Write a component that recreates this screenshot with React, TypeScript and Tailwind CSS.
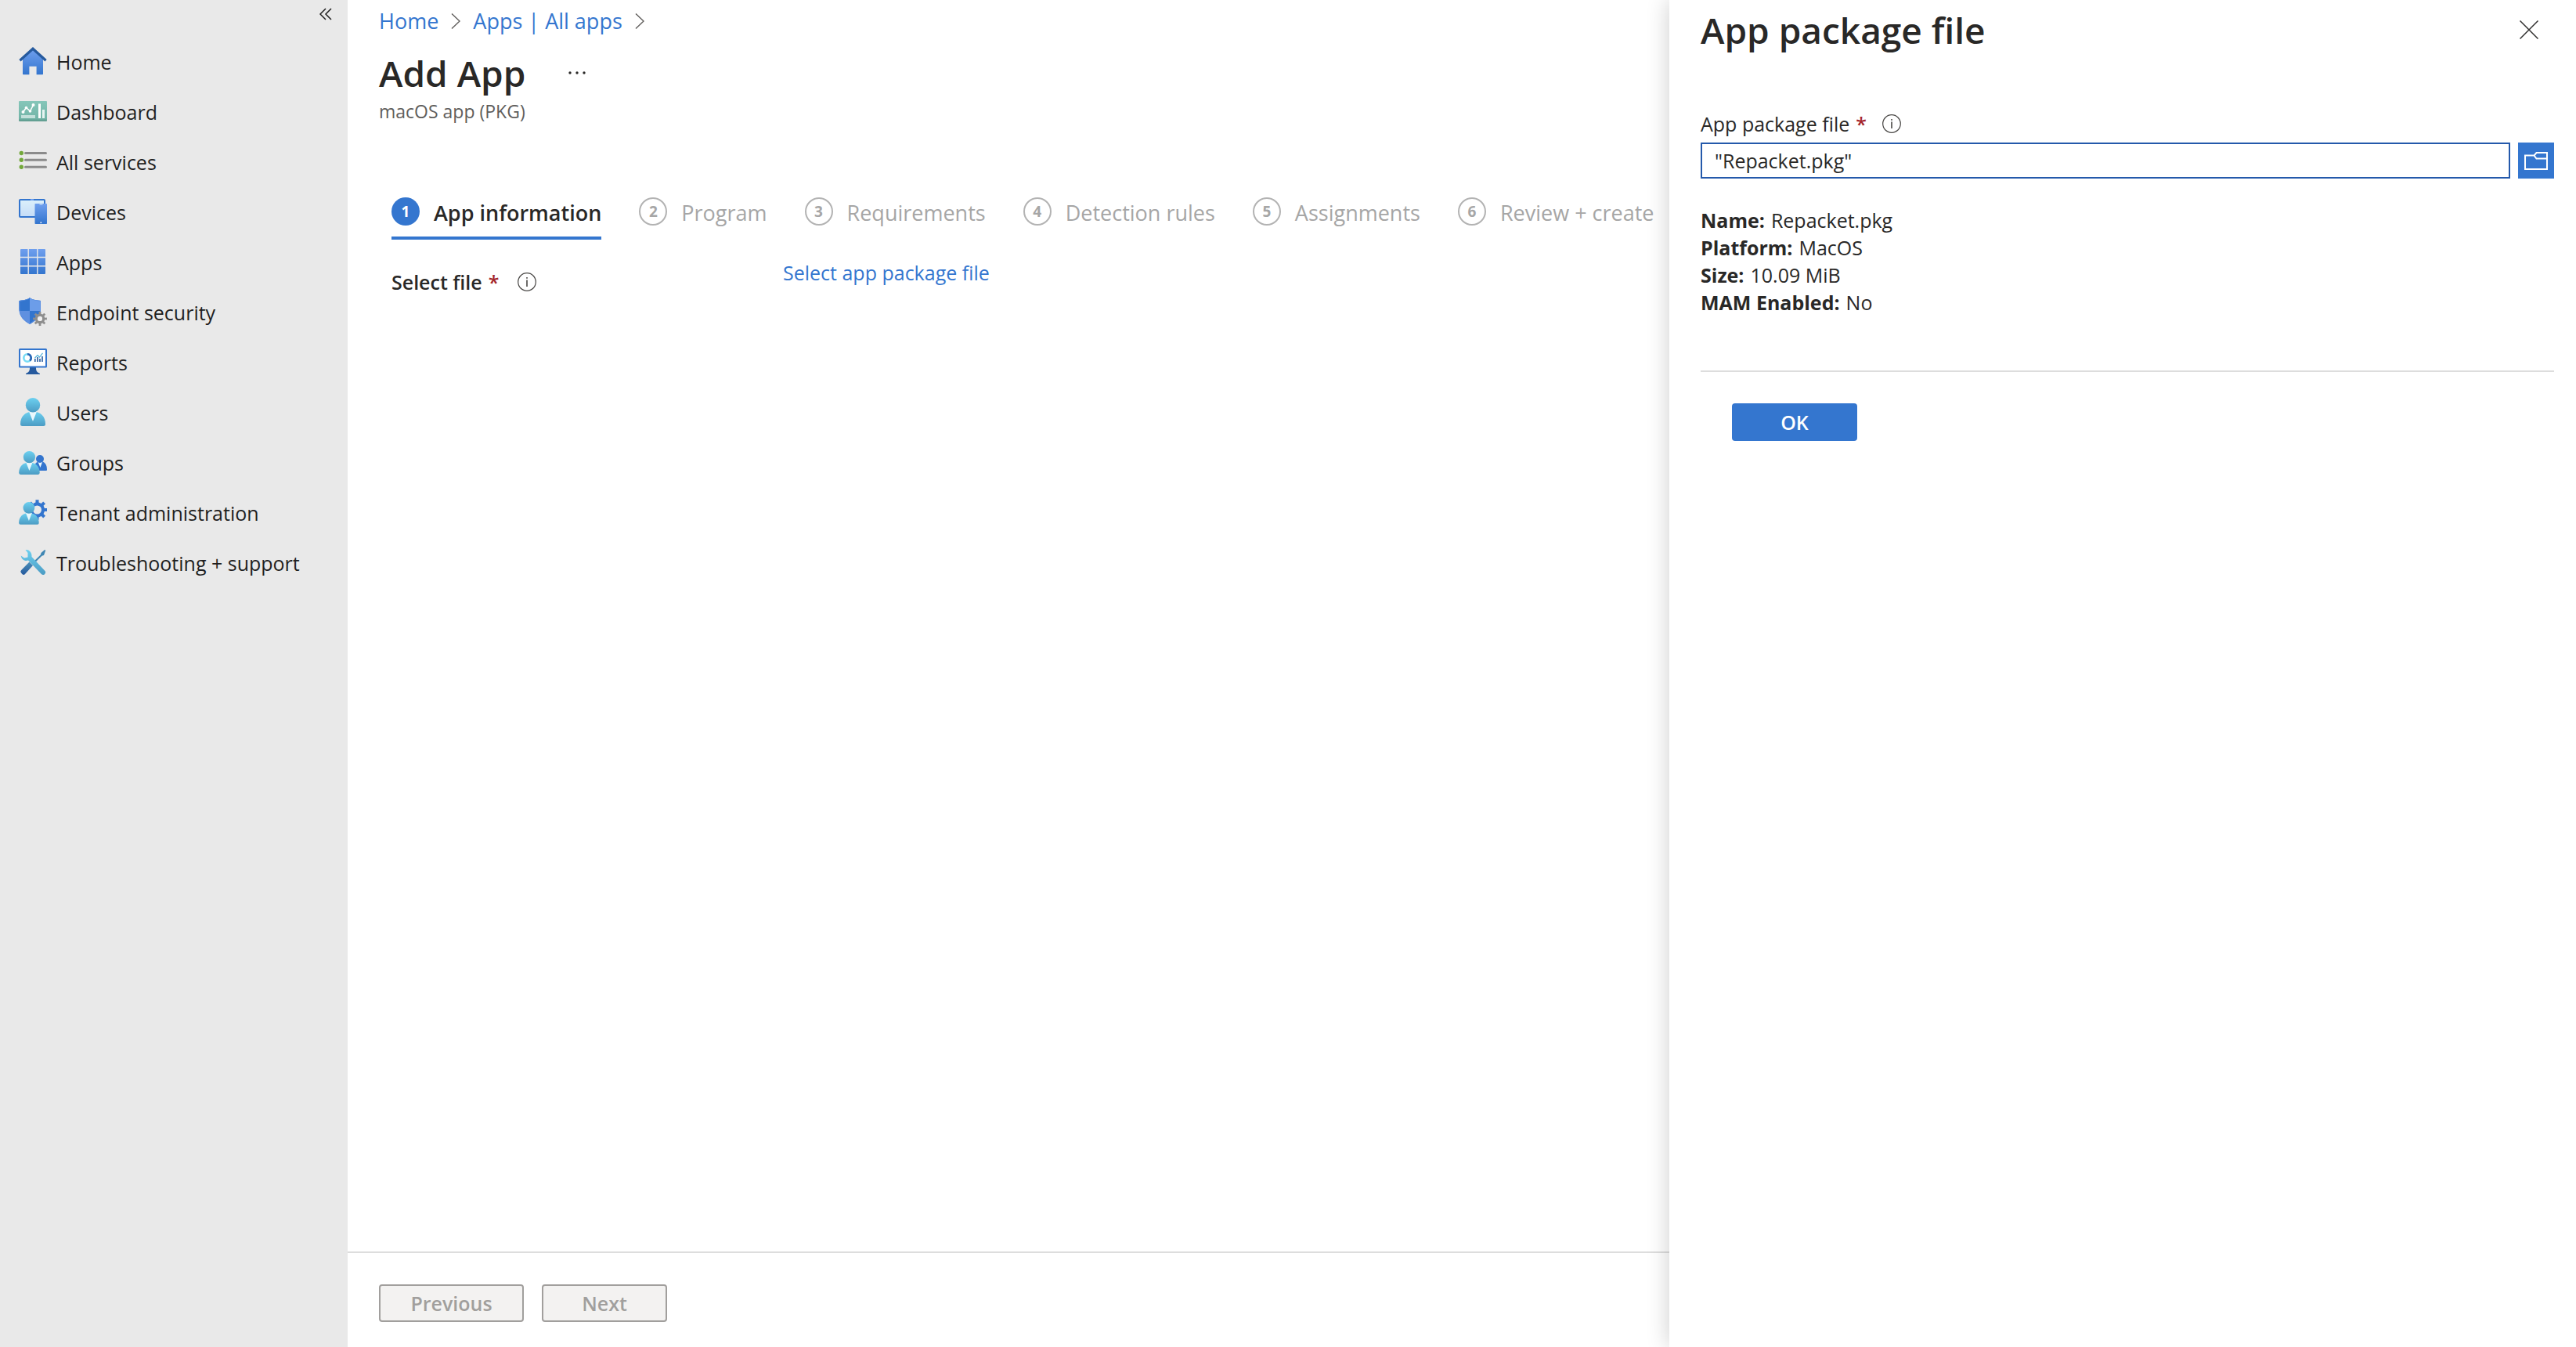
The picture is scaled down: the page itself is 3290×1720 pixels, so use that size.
import React, { useState } from "react";

const Svg = ({ children }: { children: React.ReactNode }) => (
  <svg viewBox="0 0 36 36" className="size-9 shrink-0" aria-hidden="true">
    {children}
  </svg>
);

const Gradients = () => (
  <svg className="absolute size-0" aria-hidden="true">
    <defs>
      <linearGradient id="blue" x1="0" y1="0" x2="0" y2="1">
        <stop offset="0" stopColor="#6f9fee" />
        <stop offset="1" stopColor="#3375ce" />
      </linearGradient>
      <linearGradient id="cyan" x1="0" y1="0" x2="0" y2="1">
        <stop offset="0" stopColor="#6cd0f0" />
        <stop offset="1" stopColor="#4c9cc4" />
      </linearGradient>
      <linearGradient id="teal" x1="0" y1="0" x2="0" y2="1">
        <stop offset="0" stopColor="#85c6b9" />
        <stop offset="0.85" stopColor="#74b5a8" />
        <stop offset="1" stopColor="#5c988b" />
      </linearGradient>
      <linearGradient id="screen" x1="0" y1="0" x2="0" y2="1">
        <stop offset="0" stopColor="#dcf0fb" />
        <stop offset="1" stopColor="#c5dcf7" />
      </linearGradient>
      <linearGradient id="apps" gradientUnits="userSpaceOnUse" x1="0" y1="2" x2="0" y2="34">
        <stop offset="0" stopColor="#6f9fee" />
        <stop offset="1" stopColor="#3375ce" />
      </linearGradient>
      <linearGradient id="navy" x1="0" y1="0" x2="0" y2="1">
        <stop offset="0" stopColor="#4a8fb8" />
        <stop offset="1" stopColor="#265a9e" />
      </linearGradient>
    </defs>
  </svg>
);

const HomeIcon = () => (
  <Svg>
    <path d="M18 3 31 15V34.500a.8.8 0 0 1-.8.8H22.600V24.800H13.400V35.300H5.800a.8.8 0 0 1-.8-.8V15Z" fill="url(#blue)" />
    <path d="M1.400 17.200 18 2.200 34.600 17.200" fill="none" stroke="#265a9e" strokeWidth="3.200" />
  </Svg>
);

const DashboardIcon = () => (
  <Svg>
    <rect y="5" width="36" height="26" rx="1" fill="url(#teal)" />
    <rect x="3" y="23" width="18" height="4" fill="#c3e0da" />
    <path d="M5.500 19 9.500 13.500 14.500 18 18.500 10" fill="none" stroke="#fff" strokeWidth="1.600" />
    <g fill="#fff">
      <circle cx="5.500" cy="19" r="2" />
      <circle cx="9.500" cy="13.500" r="1.800" />
      <circle cx="14.500" cy="18" r="1.800" />
      <circle cx="18.500" cy="10" r="2" />
      <rect x="25" y="8.500" width="3" height="18.500" />
    </g>
    <rect x="30" y="16" width="3" height="11" fill="#e6f4f1" />
  </Svg>
);

const ServicesIcon = () => (
  <Svg>
    {[7.5, 16.3, 25.3].map((y) => (
      <g key={y}>
        <circle cx="3.300" cy={y} r="2.700" fill="#73a83b" />
        <path d={`M8.500 ${y}H34.500`} stroke="#8b8b8b" strokeWidth="3" strokeLinecap="round" />
      </g>
    ))}
  </Svg>
);

const DevicesIcon = () => (
  <Svg>
    <rect x="1" y="3" width="32" height="22" rx="1" fill="url(#screen)" stroke="#3375ce" strokeWidth="2" />
    <path d="M15 3h4" stroke="#6f9fee" strokeWidth="2" />
    <rect x="20.500" y="8" width="15.500" height="26" rx="0.800" fill="url(#blue)" />
    <path d="M26.500 9h4" stroke="#c5dcf7" strokeWidth="1.200" />
    <rect x="27.500" y="31.500" width="1.600" height="1.600" fill="#fff" />
  </Svg>
);

const AppsIcon = () => (
  <Svg>
    <rect x="2" y="2" width="32" height="32" rx="1" fill="url(#apps)" />
    <path d="M12.200 2v32M23.800 2v32M2 12.500h32M2 23.800h32" stroke="#e9e9e9" strokeWidth="1.400" />
  </Svg>
);

function gearPath(cx: number, cy: number, inner: number, outer: number, teeth: number, hole: number) {
  const pts: string[] = [];
  for (let i = 0; i < teeth; i++) {
    const a = (i / teeth) * Math.PI * 2 - Math.PI / 2;
    const s = (Math.PI * 2) / teeth;
    [
      [inner, -0.27],
      [outer, -0.2],
      [outer, 0.2],
      [inner, 0.27],
    ].forEach(([r, o]) => {
      pts.push(`${(cx + r * Math.cos(a + o * s)).toFixed(2)} ${(cy + r * Math.sin(a + o * s)).toFixed(2)}`);
    });
  }
  return `M${pts.join("L")}ZM${cx - hole} ${cy}a${hole} ${hole} 0 1 0 ${hole * 2} 0a${hole} ${hole} 0 1 0 ${-hole * 2} 0Z`;
}

const SecurityIcon = () => (
  <Svg>
    <clipPath id="shield">
      <path d="M14 0C10 3.500 5 3 .5 4V15C.5 25 8 30.500 14 34 20 30.500 28 25 28 15V4C23 3 18 3.500 14 0Z" />
    </clipPath>
    <g clipPath="url(#shield)">
      <rect width="28" height="34" fill="#5f90e0" />
      <path d="M0 0h14v17H0zM14 17h14v17H14z" fill="#3375ce" />
      <path d="M14 0h14v17H14z" fill="#6c9de9" />
      <path d="M14 0C10 3.500 5 3 .5 4V15C.5 25 8 30.500 14 34 20 30.500 28 25 28 15V4C23 3 18 3.500 14 0Z" fill="none" stroke="#5b8fe0" strokeWidth="1.600" />
    </g>
    <path d={gearPath(27, 27, 6.4, 9, 8, 3)} fill="#8e8e8e" fillRule="evenodd" />
    <circle cx="27" cy="27" r="3" fill="#efefef" />
  </Svg>
);

const ReportsIcon = () => (
  <Svg>
    <path d="M14 25h8c0 4 .5 6 5 8v1H9v-1c4.500-2 5-4 5-8Z" fill="#265a9e" />
    <rect x="1" y="2" width="34" height="22.500" rx="0.500" fill="#fff" stroke="#3375ce" strokeWidth="2" />
    <circle cx="11" cy="13" r="4.700" fill="none" stroke="#78dcf5" strokeWidth="2.600" />
    <path d="M11 8.300a4.700 4.700 0 0 1 3 8.300" fill="none" stroke="#2b64b4" strokeWidth="2.600" />
    <path d="M20.800 18v-4M24 18v-6M27 18v-4M30 18v-7" stroke="#265a9e" strokeWidth="1.600" />
    <path d="M20.500 13 24 9.500 26.500 12 30.500 6.800" fill="none" stroke="#4fb0d8" strokeWidth="1.200" />
  </Svg>
);

const Person = () => (
  <>
    <path d="M18 17.500C8 17.500 2 24 2 33.500A2.500 2.500 0 0 0 4.500 36h27a2.500 2.500 0 0 0 2.500-2.500C34 24 28 17.500 18 17.500Z" fill="url(#cyan)" />
    <path d="M13 17.500 18 30l5-12.500Z" fill="#eaf8fd" />
    <circle cx="18" cy="9.300" r="9.200" fill="url(#cyan)" />
  </>
);

const UsersIcon = () => (
  <Svg>
    <Person />
  </Svg>
);

const GroupsIcon = () => (
  <Svg>
    <path d="M27.500 17C22 17 19 21 19 29h16a1 1 0 0 0 1-1C36 21 33 17 27.500 17Z" fill="#3375ce" />
    <path d="M24.500 18 27.500 25l2.500-7Z" fill="#eaf8fd" />
    <circle cx="27" cy="14" r="5" fill="#3375ce" />
    <g transform="translate(-1.500 4) scale(0.830)">
      <Person />
    </g>
  </Svg>
);

const TenantIcon = () => (
  <Svg>
    <path d={gearPath(23.5, 15, 9.6, 13, 8, 5.5)} fill="#3375ce" fillRule="evenodd" />
    <g transform="translate(-1.500 5) scale(0.800)">
      <Person />
    </g>
  </Svg>
);

const TroubleIcon = () => (
  <Svg>
    <path d="M34 2 32.500 2.500 28.500 6 27.800 8.500 17 19l1.500 1.500L29.500 9.800 32 9 34 3.500Z" fill="#3f86b3" />
    <path d="M13.500 17.500 18 22 8 33a2.500 2.500 0 0 1-3.500.2L3 31.500a2.500 2.500 0 0 1 .2-3.500Z" fill="url(#navy)" />
    <path d="M8.500 2C13 1.500 17 5 16.500 11L33 28.500a3 3 0 0 1-4.200 4.600L12 15.500C8 17 3.500 15 2.700 9.500L7 12.500 11.500 11.500V6Z" fill="url(#cyan)" />
  </Svg>
);

const navItems = [
  { label: "Home", Icon: HomeIcon },
  { label: "Dashboard", Icon: DashboardIcon },
  { label: "All services", Icon: ServicesIcon },
  { label: "Devices", Icon: DevicesIcon },
  { label: "Apps", Icon: AppsIcon },
  { label: "Endpoint security", Icon: SecurityIcon },
  { label: "Reports", Icon: ReportsIcon },
  { label: "Users", Icon: UsersIcon },
  { label: "Groups", Icon: GroupsIcon },
  { label: "Tenant administration", Icon: TenantIcon },
  { label: "Troubleshooting + support", Icon: TroubleIcon },
];

const steps = ["App information", "Program", "Requirements", "Detection rules", "Assignments", "Review + create"];

const details = [
  ["Name:", "Repacket.pkg"],
  ["Platform:", "MacOS"],
  ["Size:", "10.09 MiB"],
  ["MAM Enabled:", "No"],
];

const Info = () => (
  <button type="button" aria-label="More information" className="size-6 shrink-0">
    <svg viewBox="0 0 24 24" className="size-6" fill="none" stroke="#484644" aria-hidden="true">
      <circle cx="12" cy="12" r="11.300" strokeWidth="1.200" />
      <path d="M12 9.500V18" strokeWidth="1.600" />
      <path d="M12 6v1.800" strokeWidth="1.600" />
    </svg>
  </button>
);

const Crumb = () => (
  <svg viewBox="0 0 12 20" className="h-5 w-3" fill="none" stroke="#605e5c" strokeWidth="1.400" aria-hidden="true">
    <path d="M1 .5 11 10 1 19.500" />
  </svg>
);

export default function App() {
  const [file, setFile] = useState('"Repacket.pkg"');
  return (
    <div className="flex min-h-screen bg-white font-['Open_Sans','Noto_Sans',sans-serif] text-[25px] leading-9 text-[#292827]">
      <Gradients />
      <aside className="w-[444px] shrink-0 bg-[#e9e9e9] text-[#1f1f1f]">
        <div className="flex h-[46px] justify-end pt-2.5 pr-5">
          <button type="button" aria-label="Collapse menu" className="h-4 w-4">
            <svg viewBox="0 0 16 16" className="size-4" fill="none" stroke="#1f1f1f" strokeWidth="1.500" aria-hidden="true">
              <path d="M8 1 1 8l7 7M15 1 8 8l7 7" />
            </svg>
          </button>
        </div>
        <nav>
          <ul>
            {navItems.map(({ label, Icon }) => (
              <li key={label}>
                <a href="#" className="flex h-16 items-center gap-3 pl-6">
                  <Icon />
                  <span className="pt-0.5">{label}</span>
                </a>
              </li>
            ))}
          </ul>
        </nav>
      </aside>

      <main className="flex min-w-0 flex-1 flex-col">
        <div className="flex-1 pl-10">
          <nav aria-label="Breadcrumb" className="flex h-[54px] items-center gap-4 text-[27px] text-[#3476cf]">
            <a href="#">Home</a>
            <Crumb />
            <a href="#">Apps | All apps</a>
            <Crumb />
          </nav>
          <div className="flex h-[78px] items-center gap-[54px]">
            <h1 className="text-[46px] font-semibold">Add App</h1>
            <button type="button" aria-label="More actions">
              <svg viewBox="0 0 24 6" className="h-1.5 w-6" fill="#292827" aria-hidden="true">
                <circle cx="3" cy="3" r="1.700" />
                <circle cx="12" cy="3" r="1.700" />
                <circle cx="21" cy="3" r="1.700" />
              </svg>
            </button>
          </div>
          <p className="h-5 text-[23px] leading-5 text-[#605e5c]">macOS app (PKG)</p>

          <div className="pt-[94px] pl-4">
            <ol className="flex gap-12 text-[27px] whitespace-nowrap">
              {steps.map((s, i) => (
                <li key={s}>
                  <button
                    type="button"
                    className={
                      i === 0
                        ? "flex h-[60px] items-start gap-[18px] border-b-4 border-[#3476cf] font-semibold"
                        : "flex h-[60px] items-start gap-[18px] border-b-4 border-transparent text-[#a6a6a6]"
                    }
                  >
                    <span
                      className={
                        i === 0
                          ? "mt-1.5 flex size-9 items-center justify-center rounded-full bg-[#3476cf] text-[19px] font-bold text-white"
                          : "mt-1.5 flex size-9 items-center justify-center rounded-full border-2 border-[#b3b3b3] text-[19px] font-bold"
                      }
                    >
                      {i + 1}
                    </span>
                    <span className="mt-2">{s}</span>
                  </button>
                </li>
              ))}
            </ol>
            <div className="flex items-start pt-6">
              <div className="flex w-[500px] items-center pt-3">
                <span className="font-semibold">Select file</span>
                <span className="ml-2 font-semibold text-[#a4262c]">*</span>
                <span className="ml-6 flex">
                  <Info />
                </span>
              </div>
              <a href="#" className="text-[#3476cf]">
                Select app package file
              </a>
            </div>
          </div>
        </div>
        <footer className="flex gap-[23px] border-t-2 border-[#dddddd] py-10 pr-10 pb-8 pl-10 font-semibold text-[#a19f9d]">
          <button type="button" disabled className="h-12 w-[185px] rounded border-2 border-[#a19f9d] bg-[#f3f2f1]">
            Previous
          </button>
          <button type="button" disabled className="h-12 w-40 rounded border-2 border-[#a19f9d] bg-[#f3f2f1]">
            Next
          </button>
        </footer>
      </main>

      <section
        aria-label="App package file"
        className="w-[1158px] shrink-0 bg-white pr-7 pl-10 shadow-[0_0_28px_rgba(0,0,0,0.2)]"
      >
        <header className="flex h-[76px] items-center justify-between pr-5">
          <h2 className="text-[46px] font-semibold">App package file</h2>
          <button type="button" aria-label="Close">
            <svg viewBox="0 0 24 24" className="size-6" fill="none" stroke="#323130" strokeWidth="1.500" aria-hidden="true">
              <path d="M.5.5l23 23M23.500.5l-23 23" />
            </svg>
          </button>
        </header>
        <div className="flex items-center pt-16">
          <label htmlFor="package">App package file</label>
          <span className="ml-2 font-semibold text-[#a4262c]">*</span>
          <span className="ml-5 flex">
            <Info />
          </span>
        </div>
        <div className="flex gap-2.5 pt-1.5">
          <input
            id="package"
            type="text"
            value={file}
            onChange={(e) => setFile(e.target.value)}
            className="h-[46px] min-w-0 flex-1 border-2 border-[#2459ab] px-4 outline-none"
          />
          <button type="button" aria-label="Browse" className="flex size-[46px] items-center justify-center bg-[#3476cf]">
            <svg viewBox="0 0 30 24" className="h-6 w-[30px]" fill="none" stroke="#fff" strokeWidth="2" aria-hidden="true">
              <path d="M12.500 5.500H1V23H29V2H15.500L12.500 5.500 15.500 9.500H29" />
            </svg>
          </button>
        </div>
        <dl className="pt-[36px]">
          {details.map(([k, v]) => (
            <div key={k} className="flex gap-2 leading-[35px]">
              <dt className="font-bold">{k}</dt>
              <dd>{v}</dd>
            </div>
          ))}
        </dl>
        <div className="mt-[69px] border-t-2 border-[#dddddd] pt-10 pl-10">
          <button type="button" className="h-12 w-40 rounded bg-[#3476cf] font-semibold text-white">
            OK
          </button>
        </div>
      </section>
    </div>
  );
}
